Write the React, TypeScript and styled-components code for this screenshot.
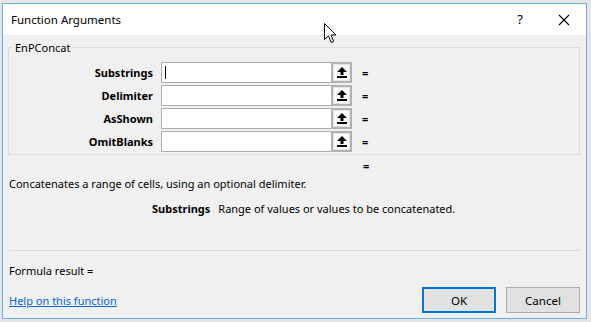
import styled, { createGlobalStyle } from "styled-components";

const GlobalStyle = createGlobalStyle`
  html, body {
    margin: 0;
    padding: 0;
    background: #e6e6e6;
  }
  body {
    font-family: "Noto Sans", "Open Sans", sans-serif;
    font-size: 11px;
    line-height: 15px;
    color: #000;
  }
`;

const Window = styled.div`
  position: relative;
  box-sizing: border-box;
  width: 585px;
  height: 316px;
  margin: 3px 0 0 2px;
  border: 1px solid #6aaee6;
  background: #f0f0f0;
  display: flex;
  flex-direction: column;
`;

const TitleBar = styled.div`
  height: 31px;
  background: #fff;
  display: flex;
  align-items: center;
  padding-left: 8px;
  flex-shrink: 0;
`;

const Title = styled.span`
  flex: 1;
  font-size: 11.5px;
`;

const TitleButton = styled.span`
  width: 44px;
  display: flex;
  justify-content: center;
  align-items: center;
  font-size: 13px;
`;

const Cursor = styled.svg`
  position: absolute;
  left: 321px;
  top: 19px;
`;

const Content = styled.div`
  flex: 1;
  display: flex;
  flex-direction: column;
  padding: 0 6px 0 5px;
`;

const GroupBox = styled.fieldset`
  margin: 5px 0 0 0;
  padding: 7px 0 2px 0;
  border: 1px solid #dcdcdc;
  display: flex;
  flex-direction: column;
  gap: 2px;
`;

const Legend = styled.legend`
  padding: 0 2px;
  margin-left: 4px;
  line-height: 15px;
`;

const ArgRow = styled.div`
  display: grid;
  grid-template-columns: 144px 191px auto;
  column-gap: 8px;
  align-items: center;
  height: 21px;
`;

const ArgLabel = styled.span`
  text-align: right;
  font-weight: 700;
`;

const RefEdit = styled.div`
  display: flex;
  height: 21px;
`;

const RefInput = styled.div<{ $focused?: boolean }>`
  flex: 1;
  box-sizing: border-box;
  border: 1px solid #ababab;
  border-right: none;
  background: #fff;
  display: flex;
  align-items: center;
  padding-left: 3px;
  &::before {
    content: "";
    display: ${(p) => (p.$focused ? "block" : "none")};
    width: 1px;
    height: 13px;
    background: #000;
  }
`;

const RefButton = styled.div`
  width: 21px;
  box-sizing: border-box;
  border: 2px solid #b2b2b2;
  background: #e6e6e6;
  display: flex;
  align-items: center;
  justify-content: center;
`;

const RefButtonFace = styled.div`
  width: 15px;
  height: 15px;
  background: #fbfbfb;
  display: flex;
  align-items: center;
  justify-content: center;
`;

const Equals = styled.span`
  font-weight: 700;
  padding-left: 2px;
`;

const ResultEquals = styled.div`
  height: 20px;
  padding-left: 355px;
  font-weight: 700;
  display: flex;
  align-items: center;
`;

const Description = styled.div`
  padding-left: 1px;
  height: 16px;
  display: flex;
  align-items: center;
`;

const ArgHelp = styled.div`
  display: flex;
  align-items: center;
  height: 16px;
  margin-top: 9px;
  padding-left: 144px;
  gap: 8px;
`;

const ArgHelpName = styled.span`
  font-weight: 700;
`;

const Separator = styled.div`
  margin: 34px 0 0 1px;
  border-top: 1px solid #dadada;
`;

const FormulaResult = styled.div`
  padding-left: 1px;
  margin-top: 11px;
  height: 16px;
  display: flex;
  align-items: center;
`;

const Footer = styled.div`
  display: flex;
  align-items: center;
  margin-top: 9px;
  padding-left: 1px;
`;

const HelpLink = styled.a`
  color: #0066cc;
  text-decoration: underline;
  flex: 1;
  cursor: pointer;
`;

const DialogButton = styled.button<{ $default?: boolean }>`
  box-sizing: border-box;
  width: 74px;
  height: 26px;
  margin-left: 10px;
  font-family: inherit;
  font-size: 11.5px;
  color: #000;
  background: #e1e1e1;
  border: ${(p) => (p.$default ? "2px solid #0078d7" : "1px solid #adadad")};
  padding: 0;
`;

function UpArrow() {
  return (
    <svg width="10" height="11" viewBox="0 0 10 11">
      <path d="M5 0 L10 5 L6.5 5 L6.5 8 L3.5 8 L3.5 5 L0 5 Z" fill="#000" />
      <rect x="0" y="9" width="10" height="2" fill="#000" />
    </svg>
  );
}

const args = ["Substrings", "Delimiter", "AsShown", "OmitBlanks"];

export default function App() {
  return (
    <>
      <GlobalStyle />
      <Window>
        <TitleBar>
          <Title>Function Arguments</Title>
          <TitleButton>?</TitleButton>
          <TitleButton>
            <svg width="12" height="12" viewBox="0 0 12 12">
              <path d="M1 1 L11 11 M11 1 L1 11" stroke="#000" strokeWidth="1.1" />
            </svg>
          </TitleButton>
        </TitleBar>
        <Content>
          <GroupBox>
            <Legend>EnPConcat</Legend>
            {args.map((name, i) => (
              <ArgRow key={name}>
                <ArgLabel>{name}</ArgLabel>
                <RefEdit>
                  <RefInput $focused={i === 0} />
                  <RefButton>
                    <RefButtonFace>
                      <UpArrow />
                    </RefButtonFace>
                  </RefButton>
                </RefEdit>
                <Equals>=</Equals>
              </ArgRow>
            ))}
          </GroupBox>
          <ResultEquals>=</ResultEquals>
          <Description>Concatenates a range of cells, using an optional delimiter.</Description>
          <ArgHelp>
            <ArgHelpName>Substrings</ArgHelpName>
            <span>Range of values or values to be concatenated.</span>
          </ArgHelp>
          <Separator />
          <FormulaResult>Formula result =</FormulaResult>
          <Footer>
            <HelpLink>Help on this function</HelpLink>
            <DialogButton $default>OK</DialogButton>
            <DialogButton>Cancel</DialogButton>
          </Footer>
        </Content>
        <Cursor width="13" height="21" viewBox="0 0 13 21">
          <path
            d="M0.5 0.5 L0.5 16.5 L4.5 12.8 L7.2 19.5 L9.6 18.5 L7 12 L12 12 Z"
            fill="#fff"
            stroke="#000"
            strokeWidth="1"
            strokeLinejoin="miter"
          />
        </Cursor>
      </Window>
    </>
  );
}
